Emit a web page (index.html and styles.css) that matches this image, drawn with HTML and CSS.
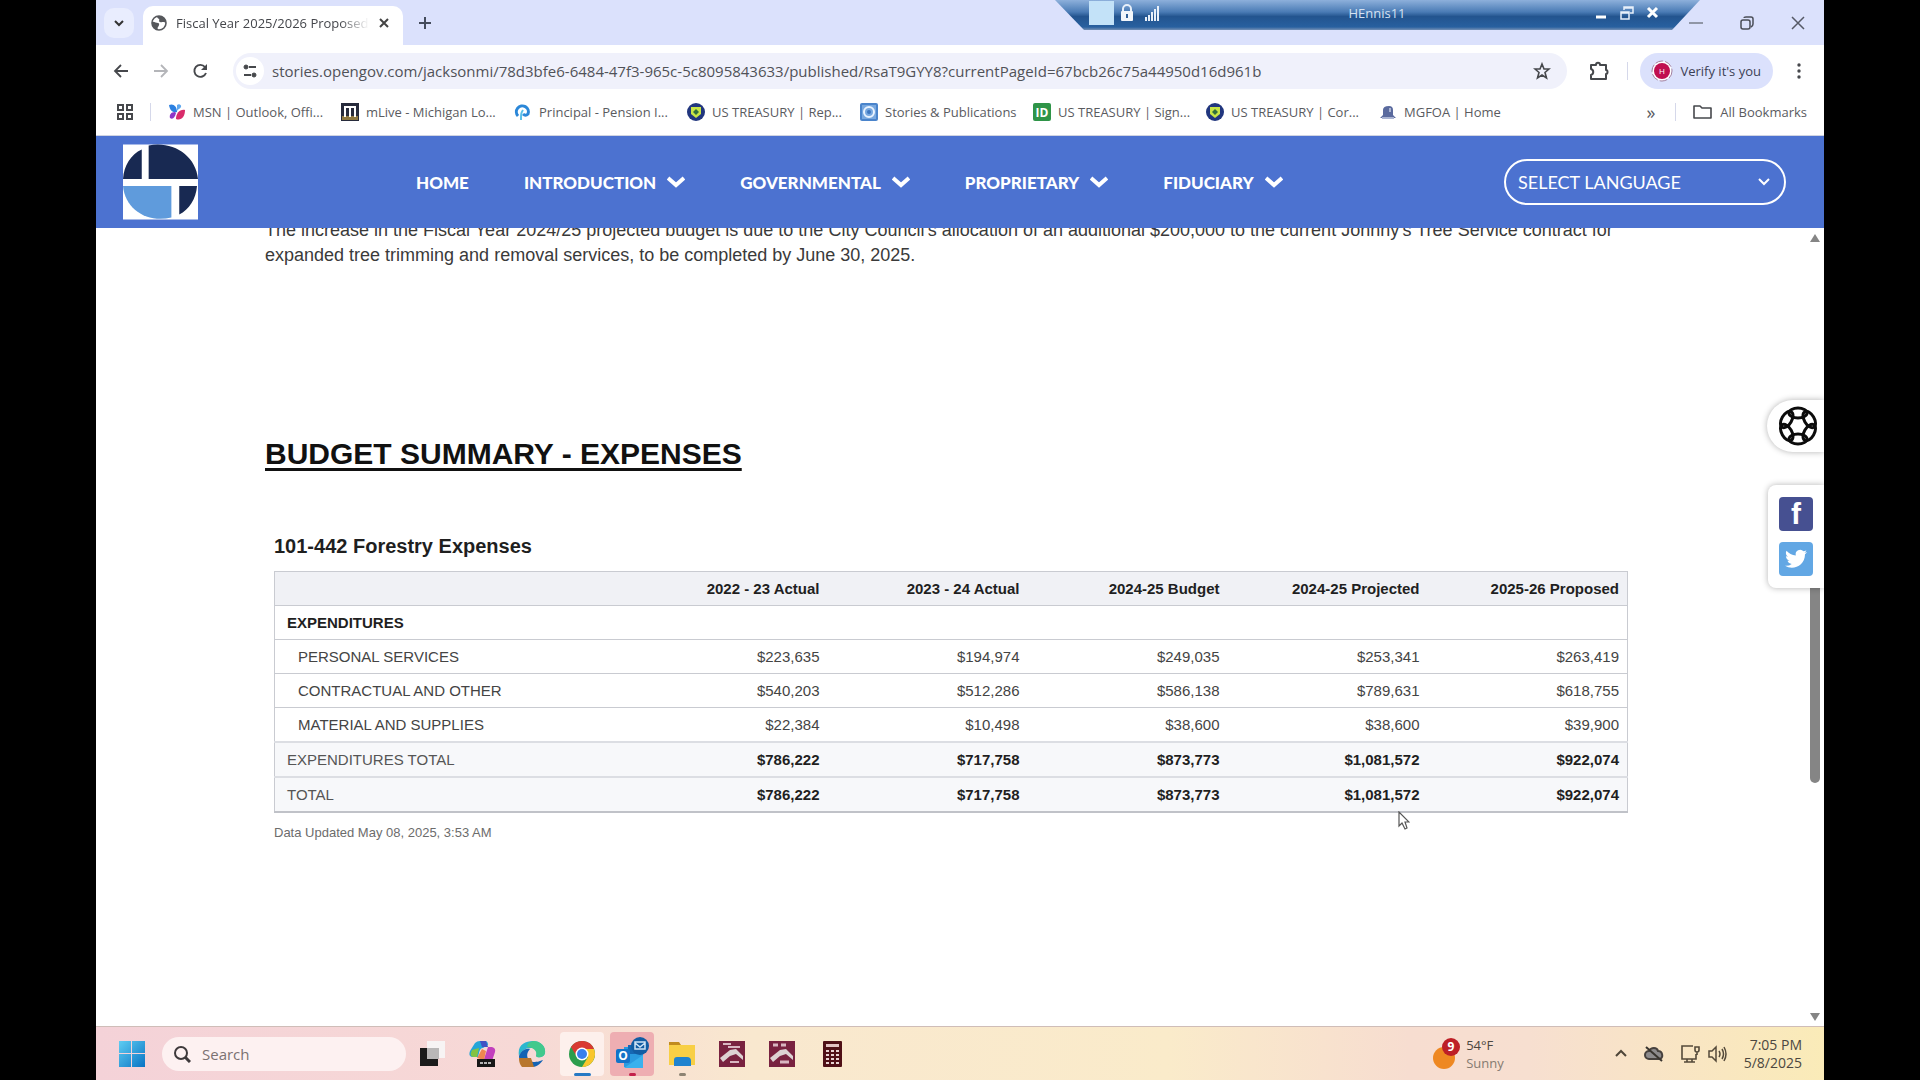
FILE: index.html
```html
<!DOCTYPE html>
<html lang="en">
<head>
    <meta charset="UTF-8">
    <meta name="viewport" content="width=device-width, initial-scale=1.0">
    <title>Fiscal Year 2025/2026 Proposed Budget</title>
    <link rel="stylesheet" href="styles.css">
</head>
<body>
    <div class="desktop">
        <!-- Remote session bar -->
        <div class="session-bar">
            <div class="session-inner">
                <span class="session-pin"></span>
                <svg class="session-icon" viewBox="0 0 16 18" width="16" height="18"><path d="M4 8V5a4 4 0 0 1 8 0v3" fill="none" stroke="#e8f0fa" stroke-width="2"/><rect x="2" y="7" width="12" height="10" rx="1" fill="#f2f6fb"/><path d="M8 10v4" stroke="#2f5f98" stroke-width="2"/></svg>
                <svg class="session-icon" viewBox="0 0 16 18" width="16" height="18" fill="#e8f0fa"><path d="M1 13h2v4H1zM4 11h2v6H4zM7 8h2v9H7zM10 5h2v12h-2zM13 2h2v15h-2z"/></svg>
                <span class="session-name">HEnnis11</span>
                <button class="session-btn" aria-label="Minimize session"><svg viewBox="0 0 14 14" width="14" height="14"><path d="M2 11h10" stroke="#fff" stroke-width="3"/></svg></button>
                <button class="session-btn" aria-label="Restore session"><svg viewBox="0 0 14 14" width="14" height="14" fill="none" stroke="#e8f0fa" stroke-width="1.5"><path d="M4 4V1h9v6h-3M4 2h9M1 6h8v7H1zM1 7h8"/></svg></button>
                <button class="session-btn" aria-label="Close session"><svg viewBox="0 0 14 14" width="14" height="14"><path d="M2 2l9 9M11 2l-9 9" stroke="#fff" stroke-width="3"/></svg></button>
            </div>
        </div>

        <!-- Browser chrome -->
        <div class="tab-strip">
            <button class="tab-search" aria-label="Search tabs"><svg viewBox="0 0 12 12" width="12" height="12"><path d="M2 4l4 4 4-4" fill="none" stroke="#333" stroke-width="2"/></svg></button>
            <div class="tab">
                <svg viewBox="0 0 16 16" width="16" height="16"><circle cx="8" cy="8" r="7" fill="#fff" stroke="#56585c" stroke-width="1.6"/><path d="M1 7c2-1 4 1 6 1s1 3 0 4 0 2 0 3C3 15 1 11 1 7zM6 1c0 2 1 2 2 3s-1 2 1 3 3-1 6 1c0-4-3-7-7-7z" fill="#56585c"/></svg>
                <span class="tab-title">Fiscal Year 2025/2026 Proposed</span>
                <button class="icon-btn" aria-label="Close tab"><svg viewBox="0 0 12 12" width="12" height="12"><path d="M2 2l8 8M10 2l-8 8" stroke="#444" stroke-width="2"/></svg></button>
            </div>
            <button class="icon-btn new-tab" aria-label="New tab"><svg viewBox="0 0 14 14" width="14" height="14"><path d="M7 1v12M1 7h12" stroke="#444b5c" stroke-width="2"/></svg></button>
            <div class="window-controls">
                <button class="icon-btn" aria-label="Minimize"><svg viewBox="0 0 14 14" width="14" height="14"><path d="M0 7h14" stroke="#777c8a" stroke-width="1.5"/></svg></button>
                <button class="icon-btn" aria-label="Restore"><svg viewBox="0 0 14 14" width="14" height="14" fill="none" stroke="#4a4d57" stroke-width="1.5"><rect x="1" y="4" width="9" height="9" rx="2"/><path d="M4 2q0-1 2-1h5q2 0 2 2v5q0 2-2 3"/></svg></button>
                <button class="icon-btn" aria-label="Close"><svg viewBox="0 0 14 14" width="14" height="14"><path d="M1 1l12 12M13 1L1 13" stroke="#555966" stroke-width="1.5"/></svg></button>
            </div>
        </div>

        <div class="toolbar">
            <button class="icon-btn" aria-label="Back"><svg viewBox="0 0 16 16" width="16" height="16"><path d="M15 8H2M8 2L2 8l6 6" fill="none" stroke="#46484c" stroke-width="1.8"/></svg></button>
            <button class="icon-btn" aria-label="Forward"><svg viewBox="0 0 16 16" width="16" height="16"><path d="M1 8h13M8 2l6 6-6 6" fill="none" stroke="#b4b5b9" stroke-width="1.8"/></svg></button>
            <button class="icon-btn" aria-label="Reload"><svg viewBox="0 0 16 16" width="16" height="16"><path d="M13 10a6 6 0 1 1-1-6" fill="none" stroke="#46484c" stroke-width="1.9"/><path d="M14 1v6H8z" fill="#46484c"/></svg></button>
            <div class="address">
                <span class="site-info"><svg viewBox="0 0 16 16" width="16" height="16" stroke="#46484c" stroke-width="2"><path d="M7 4h7M2 12h7" /><circle cx="4" cy="4" r="2" fill="#46484c" stroke-width="1"/><circle cx="12" cy="12" r="2" fill="#46484c" stroke-width="1"/></svg></span>
                <input type="text" aria-label="Address" value="stories.opengov.com/jacksonmi/78d3bfe6-6484-47f3-965c-5c8095843633/published/RsaT9GYY8?currentPageId=67bcb26c75a44950d16d961b">
                <button class="icon-btn" aria-label="Bookmark this tab"><svg viewBox="0 0 18 18" width="18" height="18"><path d="M9 2l2 5h5l-4 3.500 1.500 5.500L9 13l-4.500 3L6 10.500 2 7h5z" fill="none" stroke="#46484c" stroke-width="1.600"/></svg></button>
            </div>
            <button class="icon-btn" aria-label="Extensions"><svg viewBox="0 0 20 20" width="20" height="20"><path d="M2 4h5c0-3 4-3 4 0h6v5c2 0 2 4 0 4v5H2v-4c3-1 3-5 0-6z" fill="none" stroke="#46484c" stroke-width="2" stroke-linejoin="round"/></svg></button>
            <span class="divider"></span>
            <button class="verify"><svg viewBox="0 0 22 22" width="22" height="22"><circle cx="11" cy="11" r="10" fill="#fff" stroke="#a3809f" stroke-dasharray="8 2"/><circle cx="11" cy="11" r="8" fill="#c00f50"/><text x="11" y="14" text-anchor="middle" font-size="8" fill="#fff">H</text></svg>Verify it's you</button>
            <button class="icon-btn menu-btn" aria-label="Menu"><svg viewBox="0 0 4 18" width="4" height="18" fill="#46484c"><circle cx="2" cy="3" r="1.700"/><circle cx="2" cy="9" r="1.700"/><circle cx="2" cy="15" r="1.700"/></svg></button>
        </div>

        <nav class="bookmarks" aria-label="Bookmarks">
            <button class="icon-btn" aria-label="Apps"><svg viewBox="0 0 18 18" width="18" height="18" fill="none" stroke="#46484c" stroke-width="2"><path d="M2 2h5v5H2zM11 2h5v5h-5zM2 11h5v5H2zM11 11h5v5h-5z"/></svg></button>
            <span class="divider"></span>
            <div class="bookmark-list">
                <a href="#"><svg viewBox="0 0 18 18" width="18" height="18"><path d="M1 2c4-2 8 1 8 7-4 1-7-1-8-7z" fill="#2b7fe0"/><path d="M17 7c-5-1-9 3-9 9 5 2 9-2 9-9z" fill="#d92c6b"/><path d="M9 2c2-2 5 0 4 2s-3 2-4 4z" fill="#5fa7ee"/><path d="M7 9c-4 0-6 3-5 6 3 2 5-1 6-5z" fill="#8e36c7"/></svg>MSN | Outlook, Offi...</a>
                <a href="#"><svg viewBox="0 0 18 18" width="18" height="18"><path d="M0 0h18v18H0z" fill="#272b3c"/><path d="M1 13h16v4H1z" fill="#8e7841"/><path d="M4 14V4h10v10M9 4v10" fill="none" stroke="#fff" stroke-width="2"/></svg>mLive - Michigan Lo...</a>
                <a href="#"><svg viewBox="0 0 18 18" width="18" height="18"><path d="M4 13A6 6 0 1 1 14 11c-2 2-4 1-5 0" fill="none" stroke="#2b87d8" stroke-width="3"/><path d="M7 17c0-6 0-7 2-10" fill="none" stroke="#59c0e8" stroke-width="2"/></svg>Principal - Pension I...</a>
                <a href="#"><svg viewBox="0 0 18 18" width="18" height="18"><circle cx="9" cy="9" r="9" fill="#21367e"/><path d="M4 4h10v7l-5 4-5-4z" fill="#c9e545"/><path d="M6 9l3-3 3 3-3 3z" fill="#30703c"/></svg>US TREASURY | Rep...</a>
                <a href="#"><svg viewBox="0 0 18 18" width="18" height="18"><rect width="18" height="18" rx="2" fill="#4a84cb"/><rect x="2" y="2" width="14" height="14" fill="#78a8df"/><circle cx="9" cy="9" r="5" fill="none" stroke="#e9f3ff" stroke-width="2"/><circle cx="9" cy="9" r="2" fill="#3e77c0"/></svg>Stories &amp; Publications</a>
                <a href="#"><svg viewBox="0 0 18 18" width="18" height="18"><rect width="18" height="18" rx="2" fill="#2f9448"/><text x="9" y="14" text-anchor="middle" font-size="12" font-weight="700" fill="#fff">ID</text></svg>US TREASURY | Sign...</a>
                <a href="#"><svg viewBox="0 0 18 18" width="18" height="18"><circle cx="9" cy="9" r="9" fill="#21367e"/><path d="M4 4h10v7l-5 4-5-4z" fill="#c9e545"/><path d="M6 9l3-3 3 3-3 3z" fill="#30703c"/></svg>US TREASURY | Cor...</a>
                <a href="#"><svg viewBox="0 0 18 18" width="18" height="18"><path d="M1 15h16l-3-3V7q0-4-4-4-6 0-6 4v5z" fill="#5a6a9e"/><path d="M10 5h2v4h-2zM3 14h12v2H3z" fill="#aab4d2"/></svg>MGFOA | Home</a>
            </div>
            <button class="text-btn more" aria-label="More bookmarks">»</button>
            <span class="divider"></span>
            <button class="text-btn all"><svg viewBox="0 0 20 16" width="20" height="16"><path d="M1 14V2h6l2 2h9v10z" fill="none" stroke="#46484c" stroke-width="1.600" stroke-linejoin="round"/></svg>All Bookmarks</button>
        </nav>

        <!-- Page -->
        <header class="site-header">
            <a href="#" class="logo" aria-label="City of Jackson">
                <svg viewBox="0 0 76 76" width="75" height="76">
                    <path d="M0 0h76v76H0z" fill="#fff"/>
                    <path d="M19 5v30H0C1 21 8 10 19 5zM26 1c24-5 48 10 50 34H26zM57 42h18c-1 13-8 24-18 29z" fill="#182952"/>
                    <path d="M0 42h49v32C24 80 2 65 0 42z" fill="#5f9bdc"/>
                </svg>
            </a>
            <nav class="main-nav" aria-label="Main">
                <a href="#">HOME</a>
                <a href="#">INTRODUCTION <svg viewBox="0 0 18 12" width="18" height="12"><path d="M1 2l8 7 8-7"/></svg></a>
                <a href="#">GOVERNMENTAL <svg viewBox="0 0 18 12" width="18" height="12"><path d="M1 2l8 7 8-7"/></svg></a>
                <a href="#">PROPRIETARY <svg viewBox="0 0 18 12" width="18" height="12"><path d="M1 2l8 7 8-7"/></svg></a>
                <a href="#">FIDUCIARY <svg viewBox="0 0 18 12" width="18" height="12"><path d="M1 2l8 7 8-7"/></svg></a>
            </nav>
            <div class="language">
                <select aria-label="Select language">
                    <option>SELECT LANGUAGE</option>
                </select>
                <svg viewBox="0 0 14 10" width="14" height="10"><path d="M2 2l5 5 5-5"/></svg>
            </div>
        </header>

        <main class="page">
            <article class="story">
                <p>The increase in the Fiscal Year 2024/25 projected budget is due to the City Council's allocation of an additional $200,000 to the current Johnny's Tree Service contract for expanded tree trimming and removal services, to be completed by June 30, 2025.</p>
                <h2>BUDGET SUMMARY - EXPENSES</h2>
                <section class="report">
                    <h3>101-442 Forestry Expenses</h3>
                    <table>
                        <thead>
                            <tr><th></th><th>2022 - 23 Actual</th><th>2023 - 24 Actual</th><th>2024-25 Budget</th><th>2024-25 Projected</th><th>2025-26 Proposed</th></tr>
                        </thead>
                        <tbody>
                            <tr><th colspan="6">EXPENDITURES</th></tr>
                            <tr><td>PERSONAL SERVICES</td><td>$223,635</td><td>$194,974</td><td>$249,035</td><td>$253,341</td><td>$263,419</td></tr>
                            <tr><td>CONTRACTUAL AND OTHER</td><td>$540,203</td><td>$512,286</td><td>$586,138</td><td>$789,631</td><td>$618,755</td></tr>
                            <tr><td>MATERIAL AND SUPPLIES</td><td>$22,384</td><td>$10,498</td><td>$38,600</td><td>$38,600</td><td>$39,900</td></tr>
                        </tbody>
                        <tfoot>
                            <tr><td>EXPENDITURES TOTAL</td><td>$786,222</td><td>$717,758</td><td>$873,773</td><td>$1,081,572</td><td>$922,074</td></tr>
                            <tr><td>TOTAL</td><td>$786,222</td><td>$717,758</td><td>$873,773</td><td>$1,081,572</td><td>$922,074</td></tr>
                        </tfoot>
                    </table>
                    <p class="updated">Data Updated May 08, 2025, 3:53 AM</p>
                </section>
            </article>

            <div class="scrollbar">
                <svg viewBox="0 0 12 10" width="12" height="10"><path d="M6 1l5 8H1z" fill="#858585"/></svg>
                <div class="track"><div class="thumb"></div></div>
                <svg viewBox="0 0 12 10" width="12" height="10"><path d="M6 9l5-8H1z" fill="#858585"/></svg>
            </div>

            <button class="assist" aria-label="Accessibility tools">
                <svg viewBox="0 0 42 42" width="42" height="42" fill="none" stroke="#0c0c0c" stroke-width="3">
                    <ellipse cx="21" cy="8" rx="9" ry="5"/><ellipse cx="21" cy="8" rx="9" ry="5" transform="rotate(60 21 21)"/><ellipse cx="21" cy="8" rx="9" ry="5" transform="rotate(120 21 21)"/><ellipse cx="21" cy="8" rx="9" ry="5" transform="rotate(180 21 21)"/><ellipse cx="21" cy="8" rx="9" ry="5" transform="rotate(240 21 21)"/><ellipse cx="21" cy="8" rx="9" ry="5" transform="rotate(300 21 21)"/>
                </svg>
            </button>
            <div class="share">
                <a href="#" class="facebook" aria-label="Share on Facebook">f</a>
                <a href="#" class="twitter" aria-label="Share on Twitter"><svg viewBox="0 0 24 24" width="24" height="24"><path d="M23 5c-1 .5-1.700.6-2.600.7 1-.6 1.600-1.400 2-2.500-.9.500-1.900.9-2.900 1.100a4.500 4.500 0 0 0-7.700 4.100C8 8.200 4.700 6.400 2.500 3.700c-1.200 2-.6 4.700 1.400 6-.7 0-1.400-.2-2-.6 0 2.200 1.500 4.100 3.600 4.600-.7.200-1.400.2-2 .1.600 1.800 2.200 3.100 4.200 3.100A9 9 0 0 1 1 18.800c8 5 20 0 20-11.500.8-.6 1.500-1.400 2-2.300z" fill="#fff"/></svg></a>
            </div>
            <svg class="cursor" viewBox="0 0 12 19" width="12" height="19"><path d="M1 1v14l3-3 3 6 2-1-2-6h4z" fill="#fff" stroke="#555" stroke-width="1.200"/></svg>
        </main>

        <!-- Taskbar -->
        <footer class="taskbar">
            <button class="task start" aria-label="Start"><svg viewBox="0 0 28 28" width="28" height="28"><defs><linearGradient id="win" x2="1" y2="1"><stop stop-color="#5fcdf2"/><stop offset="1" stop-color="#0873c4"/></linearGradient></defs><path d="M1 1h12v12H1zM14 1h13v12H14zM1 14h12v13H1zM14 14h13v13H14z" fill="url(#win)"/></svg></button>
            <div class="search">
                <svg viewBox="0 0 18 18" width="18" height="18"><circle cx="8" cy="8" r="6" fill="none" stroke="#3e393b" stroke-width="2"/><path d="M12 12l5 5" stroke="#3e393b" stroke-width="3"/></svg>
                <input type="text" aria-label="Search" placeholder="Search">
            </div>
            <div class="apps">
                <button class="task" aria-label="Task view"><svg viewBox="0 0 28 28" width="28" height="28"><path d="M9 1h18v17H9z" fill="#f7f4f4"/><path d="M2 8h18v18H2z" fill="#1b1b1b"/><path d="M9 8h12v11H9z" fill="#b9b7b7"/></svg></button>
                <button class="task" aria-label="Copilot"><svg viewBox="0 0 28 28" width="28" height="28"><path d="M7 3q2-2 5-2h5q3 0 3 4l-5 3q-3 0-4 5l-1 4H4q-4-1-2-6z" fill="#24a5d8"/><path d="M4 10l7-2-2 9H5q-4-1-1-7z" fill="#82c344"/><path d="M12 1h6l2 6h-6z" fill="#4151c4"/><path d="M20 7h4q4 1 3 5l-3 9H12l4-2z" fill="#c240bd"/><path d="M9 18l5-9 4 2-2 9z" fill="#ef8650"/><path d="M9 19h18v8H9z" fill="#171717"/><path d="M12 23h12" stroke="#b5b5b5" stroke-width="2" stroke-dasharray="3 1"/></svg></button>
                <button class="task" aria-label="Edge"><svg viewBox="0 0 28 28" width="28" height="28"><path d="M1 16C-1 5 7 1 15 1c8 0 13 6 12 12-1 5-8 5-9 3 2-5-1-8-5-8-6 0-10 3-12 8z" fill="#2ab6cf"/><path d="M15 1c8 0 13 6 12 12-1 5-8 5-9 3 2-5-3-9-9-9 0-3 2-5 6-6z" fill="#42c98c"/><path d="M1 16c2-5 6-8 11-7-5 5-3 12 3 13 5 0 7-1 10-2-5 8-12 8-17 6-5-3-7-6-7-10z" fill="#1463b4"/><path d="M1 18h12l3 9H4q-3-3-3-9z" fill="#b8762d"/></svg></button>
                <button class="task active" aria-label="Chrome"><svg viewBox="0 0 28 28" width="28" height="28"><circle cx="14" cy="14" r="13" fill="#2c9d4d"/><path d="M3 7a13 13 0 0 1 23 2H14L9 17z" fill="#d93a31"/><path d="M26 9a13 13 0 0 1-12 18l6-10q0-5-6-8z" fill="#f9c62c"/><circle cx="14" cy="14" r="6.500" fill="#fff"/><circle cx="14" cy="14" r="5" fill="#397fec"/></svg></button>
                <button class="task alert" aria-label="Outlook"><svg viewBox="0 0 34 34" width="34" height="34"><path d="M9 10h19v20H9z" fill="#2a9be0"/><path d="M13 8h11v9H13z" fill="#1668b4"/><path d="M9 31l19-13v13z" fill="#39b1ed"/><rect x="1" y="12" width="14" height="14" rx="2" fill="#1373c8"/><text x="8" y="23" text-anchor="middle" font-size="12" font-weight="700" fill="#fff">O</text><circle cx="25" cy="9" r="9" fill="#135da3"/><path d="M20 5h10v7H20zM20 6l5 4 5-4" fill="none" stroke="#cfe4f6" stroke-width="1.500"/></svg></button>
                <button class="task running" aria-label="File Explorer"><svg viewBox="0 0 28 28" width="28" height="28"><path d="M1 2h10l2 3H1z" fill="#c18b1e"/><path d="M1 5h26v20H1z" fill="#f8cf45"/><path d="M6 26v-6q0-3 3-3h10q4 0 4 4v5z" fill="#1f83cf"/></svg></button>
                <button class="task" aria-label="Database A"><svg viewBox="0 0 28 28" width="28" height="28"><path d="M1 1h26v26H1z" fill="#792240"/><path d="M2 18l10-8 6-1 7 7v4l-7-6-6 2-7 6z" fill="#ddd2d3"/><path d="M5 4h8M10 7h12M12 22h9" stroke="#d9b6c1" stroke-width="2"/></svg></button>
                <button class="task" aria-label="Database B"><svg viewBox="0 0 28 28" width="28" height="28"><path d="M1 1h26v26H1z" fill="#792240"/><path d="M2 18l10-8 6-1 7 7v4l-7-6-6 2-7 6z" fill="#ddd2d3"/><path d="M5 5h5M13 5h5M12 22h9" stroke="#d9b6c1" stroke-width="3"/></svg></button>
                <button class="task" aria-label="Calculator"><svg viewBox="0 0 28 28" width="28" height="28"><rect x="5" y="1" width="19" height="26" rx="1" fill="#4f1017"/><path d="M8 4h13v3H8z" fill="#e2c3c3"/><path d="M8 11h13M8 15h13M8 19h13M8 23h13" stroke="#e8d3d3" stroke-width="2" stroke-dasharray="3 2"/></svg></button>
            </div>
            <div class="tray">
                <button class="weather">
                    <svg viewBox="0 0 28 32" width="28" height="32"><circle cx="11" cy="20" r="11" fill="#ee8822"/><circle cx="18" cy="9" r="9" fill="#bd1f26"/><text x="18" y="13" text-anchor="middle" font-size="12" font-weight="700" fill="#fff">9</text></svg>
                    <span>54°F<br><small>Sunny</small></span>
                </button>
                <button class="icon-btn" aria-label="Show hidden icons"><svg viewBox="0 0 14 14" width="14" height="14"><path d="M2 9l5-5 5 5" fill="none" stroke="#4f4639" stroke-width="2"/></svg></button>
                <button class="icon-btn" aria-label="OneDrive"><svg viewBox="0 0 20 18" width="20" height="18"><path d="M5 14a4 4 0 0 1 0-8c2-4 8-4 9 0 5 0 6 8 1 8z" fill="#8d8b8d" stroke="#46413e" stroke-width="2"/><path d="M2 2l16 14" stroke="#38342f" stroke-width="2"/></svg></button>
                <div class="quick-settings">
                    <button class="icon-btn" aria-label="Network"><svg viewBox="0 0 20 20" width="20" height="20" fill="none" stroke="#544a3a" stroke-width="1.600"><path d="M13 2H2v13h14v-5M7 15v3M12 15v3M4 18h11M15 3h4v3q0 2-2 2t-2-2zM17 8v3"/></svg></button>
                    <button class="icon-btn" aria-label="Volume"><svg viewBox="0 0 20 18" width="20" height="18" fill="none" stroke="#544a3a" stroke-width="1.500"><path d="M1 6h3l4-4v14l-4-4H1zM11 6q2 3 0 6M14 4q3 5 0 10M16 2q4 7 0 14"/></svg></button>
                </div>
                <div class="clock">7:05 PM<br>5/8/2025</div>
            </div>
        </footer>
    </div>
</body>
</html>
```
FILE: styles.css
```css
:root {
    --site-blue: #4c72d0;
    --chrome-tint: #dbe1fc;
    --line: #c9cbd1;
}

* {
    margin: 0;
    padding: 0;
    box-sizing: border-box;
}

body {
    background-color: #000;
    color: #1f1f1f;
    font-family: "Open Sans", "Noto Sans", sans-serif;
    font-size: 13px;
}

button,
input,
select {
    font: inherit;
    color: inherit;
    border: none;
    background: none;
}

a {
    color: inherit;
    text-decoration: none;
}

svg {
    flex: none;
    display: block;
}

.desktop {
    position: relative;
    display: flex;
    flex-direction: column;
    min-height: 100vh;
    margin: 0 5%;
    background-color: #fff;
    overflow: hidden;
}

.icon-btn {
    display: flex;
    align-items: center;
    justify-content: center;
    flex: none;
}

.divider {
    width: 1px;
    height: 18px;
    background-color: #d5d8ea;
}

/* Remote session bar */
.session-bar {
    position: absolute;
    top: 0;
    right: 124px;
    width: 645px;
    height: 30px;
    background: linear-gradient(#8db0db, #4a7bb5 40%, #23548f 55%, #28609f 90%, #7590b5);
    clip-path: polygon(0 0, 100% 0, 617px 100%, 29px 100%);
}

.session-inner {
    display: flex;
    align-items: center;
    height: 26px;
    padding: 0 40px 0 34px;
    color: #d5e2f2;
}

.session-pin {
    width: 25px;
    height: 24px;
    background-color: #c3e2f8;
}

.session-icon {
    margin-left: 5px;
    margin-right: 4px;
}

.session-name {
    flex: 1;
    text-align: center;
    padding-left: 8px;
}

.session-btn {
    margin-left: 12px;
}

/* Tabs */
.tab-strip {
    display: flex;
    align-items: center;
    height: 45px;
    padding-left: 8px;
    background-color: var(--chrome-tint);
}

.tab-search {
    display: flex;
    align-items: center;
    justify-content: center;
    width: 30px;
    height: 30px;
    margin-right: 9px;
    border-radius: 10px;
    background-color: #e9edfe;
}

.tab {
    display: flex;
    align-items: center;
    align-self: flex-end;
    gap: 9px;
    width: 260px;
    height: 39px;
    padding: 0 13px 6px 8px;
    border-radius: 10px 10px 0 0;
    background-color: #fff;
}

.tab-title {
    flex: 1;
    white-space: nowrap;
    color: #44464b;
    mask-image: linear-gradient(90deg, #000 85%, transparent);
}

.new-tab {
    margin-left: 15px;
}

.window-controls {
    display: flex;
    gap: 37px;
    margin-left: auto;
    padding-right: 19px;
}

/* Toolbar */
.toolbar {
    display: flex;
    align-items: center;
    height: 52px;
    padding: 0 23px 0 17px;
    background-color: #fff;
}

.toolbar > .icon-btn {
    margin-right: 24px;
}

.address {
    display: flex;
    align-items: center;
    flex: 1;
    height: 36px;
    margin-right: 22px;
    padding: 0 16px 0 3px;
    border-radius: 18px;
    background-color: #f0f1fb;
}

.address input {
    flex: 1;
    font-size: 15px;
    color: #505258;
}

.site-info {
    display: flex;
    align-items: center;
    justify-content: center;
    width: 28px;
    height: 28px;
    margin-right: 8px;
    border-radius: 50%;
    background-color: #fff;
}

.toolbar > .divider {
    margin-left: -6px;
    margin-right: 12px;
}

.verify {
    display: flex;
    align-items: center;
    gap: 7px;
    height: 36px;
    margin-right: 24px;
    padding: 0 12px 0 11px;
    border-radius: 18px;
    background-color: var(--chrome-tint);
    color: #3b3f55;
}

.toolbar > .menu-btn {
    margin-right: 0;
}

/* Bookmarks */
.bookmarks {
    display: flex;
    align-items: center;
    height: 39px;
    padding: 0 17px 8px 20px;
    color: #5a5b5f;
    border-bottom: 1px solid #d0d4e2;
}

.bookmarks > .icon-btn {
    margin-right: 16px;
}

.bookmark-list {
    display: grid;
    grid-template-columns: repeat(8, 173px);
    margin-left: 17px;
}

.bookmark-list a {
    display: flex;
    align-items: center;
    gap: 7px;
    white-space: nowrap;
}

.text-btn {
    display: flex;
    align-items: center;
    gap: 7px;
    white-space: nowrap;
}

.more {
    margin-left: auto;
    margin-right: 20px;
    font-size: 18px;
}

.all {
    margin-left: 17px;
}

/* Site header */
.site-header {
    position: relative;
    z-index: 1;
    display: flex;
    align-items: center;
    height: 92px;
    padding: 0 38px 0 27px;
    background-color: var(--site-blue);
    color: #fff;
}

.main-nav {
    display: flex;
    gap: 55px;
    margin-left: 218px;
    font-family: Lato, sans-serif;
    font-size: 17px;
    font-weight: 900;
}

.main-nav a {
    display: flex;
    align-items: center;
    gap: 11px;
}

.main-nav svg {
    fill: none;
    stroke: #fff;
    stroke-width: 4px;
}

.language {
    position: relative;
    width: 282px;
    margin-left: auto;
}

.language select {
    width: 100%;
    height: 46px;
    padding: 0 12px;
    appearance: none;
    border: 2px solid #fff;
    border-radius: 23px;
    font-family: Lato, sans-serif;
    font-size: 18px;
}

.language svg {
    position: absolute;
    top: 18px;
    right: 15px;
    fill: none;
    stroke: #fff;
    stroke-width: 2px;
    pointer-events: none;
}

/* Story */
.page {
    position: relative;
    flex: 1;
    font-family: "Liberation Sans", Arial, sans-serif;
}

.story {
    max-width: 1400px;
    margin-top: -10px;
    margin-left: 169px;
    margin-right: 196px;
}

.story > p {
    font-size: 18px;
    line-height: 25px;
    color: #3a3a3a;
}

h2 {
    margin-top: 169px;
    font-size: 30px;
    line-height: 34px;
    color: #111;
    text-decoration: underline;
    text-underline-offset: 4px;
}

.report {
    margin-top: 63px;
    margin-left: 9px;
}

h3 {
    font-size: 20px;
    line-height: 24px;
}

table {
    width: 100%;
    margin-top: 13px;
    table-layout: fixed;
    border-collapse: collapse;
    border: 1px solid var(--line);
    border-bottom: 2px solid #c0c2c8;
    font-size: 15px;
}

th,
td {
    height: 34px;
    padding: 0 8px;
    text-align: right;
    border-bottom: 1px solid var(--line);
}

th:not(:first-child) {
    width: 200px;
}

th:first-child,
td:first-child {
    padding-left: 12px;
    text-align: left;
}

thead th {
    background-color: #f0f1f5;
}

tbody td {
    color: #444;
}

tbody td:first-child {
    padding-left: 23px;
}

tfoot tr {
    border-top: 2px solid #dcdee3;
    background-color: #f7f8fa;
}

tfoot td {
    height: 35px;
    font-weight: 700;
}

tfoot td:first-child {
    font-weight: 400;
    color: #555;
}

.updated {
    margin-top: 11px;
    font-size: 13px;
    line-height: 18px;
    color: #6c6c6c;
}

/* Items over the page */
.scrollbar {
    position: absolute;
    top: 5px;
    right: 3px;
    bottom: 4px;
    display: flex;
    flex-direction: column;
    align-items: center;
}

.track {
    flex: 1;
    display: grid;
    grid-template-rows: 44fr 27fr 30fr;
    padding: 2px 0;
}

.thumb {
    grid-row: 2;
    width: 10px;
    border-radius: 5px;
    background-color: #858585;
}

.assist {
    position: absolute;
    top: 172px;
    right: 0;
    width: 57px;
    height: 52px;
    padding-left: 10px;
    border-radius: 26px 0 0 26px;
    background-color: #fff;
    box-shadow: 0 0 6px rgba(0, 0, 0, 0.3);
}

.share {
    position: absolute;
    top: 257px;
    right: 0;
    display: flex;
    flex-direction: column;
    gap: 11px;
    width: 56px;
    padding: 12px 11px;
    border-radius: 8px 0 0 8px;
    background-color: #fff;
    box-shadow: 0 0 6px rgba(0, 0, 0, 0.3);
}

.share a {
    display: flex;
    align-items: center;
    justify-content: center;
    height: 34px;
    border-radius: 4px;
    color: #fff;
    font-size: 30px;
    font-weight: 700;
}

.facebook {
    background-color: #465091;
}

.twitter {
    background-color: #62a7e4;
}

.cursor {
    position: absolute;
    top: 583px;
    left: 1302px;
}

/* Taskbar */
.taskbar {
    display: flex;
    align-items: center;
    height: 54px;
    padding: 0 22px;
    border-top: 1px solid #cfbdb8;
    background: linear-gradient(90deg, #f4d2d8, #f7d9d6 25%, #f9e8cf 38%, #faebca 62%, #f7ddd0 76%, #f7dfd0 83%, #faebb8);
}

.task {
    position: relative;
    display: flex;
    align-items: center;
    justify-content: center;
    width: 44px;
    height: 44px;
    border-radius: 4px;
}

.start {
    width: 28px;
}

.search {
    display: flex;
    align-items: center;
    gap: 11px;
    width: 244px;
    height: 34px;
    margin-left: 16px;
    padding-left: 11px;
    border-radius: 17px;
    background-color: #fdf1f1;
}

.search input {
    width: 180px;
    font-size: 15px;
}

.search input::placeholder {
    color: #7b7172;
}

.apps {
    display: flex;
    gap: 6px;
    margin-left: 4px;
}

.active {
    background-color: #fdf0ec;
}

.alert {
    background-color: #eeaeb2;
}

.active::after,
.alert::after,
.running::after {
    content: "";
    position: absolute;
    bottom: 0;
    width: 7px;
    height: 3px;
    border-radius: 2px;
    background-color: #8d8373;
}

.active::after {
    width: 17px;
    background-color: #2779c4;
}

.alert::after {
    background-color: #c3214a;
}

.tray {
    display: flex;
    align-items: center;
    gap: 16px;
    margin-left: auto;
    color: #4c4740;
}

.quick-settings {
    display: flex;
    align-items: center;
    gap: 8px;
}

.weather {
    display: flex;
    align-items: center;
    gap: 5px;
    margin-right: 94px;
    text-align: left;
    line-height: 18px;
}

.weather small {
    font-size: 13px;
    color: #857b70;
}

.clock {
    text-align: right;
    font-size: 14px;
    line-height: 18px;
}
```
